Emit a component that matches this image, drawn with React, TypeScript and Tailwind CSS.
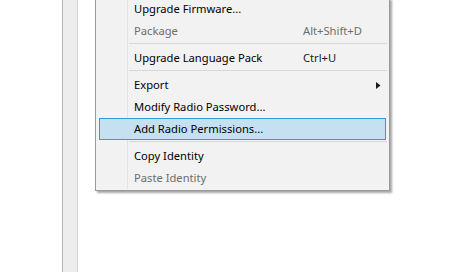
import React from "react";

type Item =
  | { kind: "item"; label: string; shortcut?: string; disabled?: boolean; submenu?: boolean; active?: boolean }
  | { kind: "sep" };

const items: Item[] = [
  { kind: "item", label: "Upgrade Firmware..." },
  { kind: "item", label: "Package", shortcut: "Alt+Shift+D", disabled: true },
  { kind: "sep" },
  { kind: "item", label: "Upgrade Language Pack", shortcut: "Ctrl+U" },
  { kind: "sep" },
  { kind: "item", label: "Export", submenu: true },
  { kind: "item", label: "Modify Radio Password..." },
  { kind: "item", label: "Add Radio Permissions...", active: true },
  { kind: "sep" },
  { kind: "item", label: "Copy Identity" },
  { kind: "item", label: "Paste Identity", disabled: true },
];

function Row({ item }: { item: Extract<Item, { kind: "item" }> }) {
  return (
    <div
      className={
        "relative flex h-[22px] items-center " +
        (item.active ? "mx-[3px] border border-[#2a9fd8] bg-[#c5e0f0]" : "mx-[3px] border border-transparent")
      }
    >
      <span
        className={
          "w-[169px] shrink-0 whitespace-nowrap pl-[34px] " +
          (item.disabled ? "text-[#6d6d6d]" : "text-black")
        }
      >
        {item.label}
      </span>
      {item.shortcut && (
        <span className={"whitespace-nowrap pl-[34px] " + (item.disabled ? "text-[#6d6d6d]" : "text-[#1a1a1a]")}>
          {item.shortcut}
        </span>
      )}
      {item.submenu && (
        <svg
          className="absolute left-[276px] top-[7px]"
          width="5"
          height="7"
          viewBox="0 0 5 7"
        >
          <polygon points="0,0 4.5,3.5 0,7" fill="#1a1a1a" />
        </svg>
      )}
    </div>
  );
}

export default function App() {
  return (
    <div
      className="flex h-[272px] w-[452px] overflow-hidden bg-white text-[11.2px]"
      style={{ fontFamily: '"Noto Sans", "Liberation Sans", sans-serif' }}
    >
      <div className="ml-[62px] h-full w-[16px] shrink-0 border-l border-r border-l-[#b4b4b4] border-r-[#d4d4d4] bg-[#ededed]" />
      <div className="ml-[17px] mt-[-2px] h-[193px] w-[295px] shrink-0 border border-t-0 border-[#9a9a9a] bg-[#f2f2f2] pb-[1px] shadow-[2px_2px_2px_rgba(0,0,0,0.35)]">
        <div className="relative">
          <div className="absolute bottom-0 left-[31px] top-0 w-px bg-[#e2e2e2]" />
          {items.map((it, i) =>
            it.kind === "sep" ? (
              <div key={i} className="relative h-[5px] pt-[1px]">
                <div className="ml-[33px] mr-[2px] h-px bg-[#d7d7d7]" />
              </div>
            ) : (
              <Row key={i} item={it} />
            )
          )}
        </div>
      </div>
    </div>
  );
}
